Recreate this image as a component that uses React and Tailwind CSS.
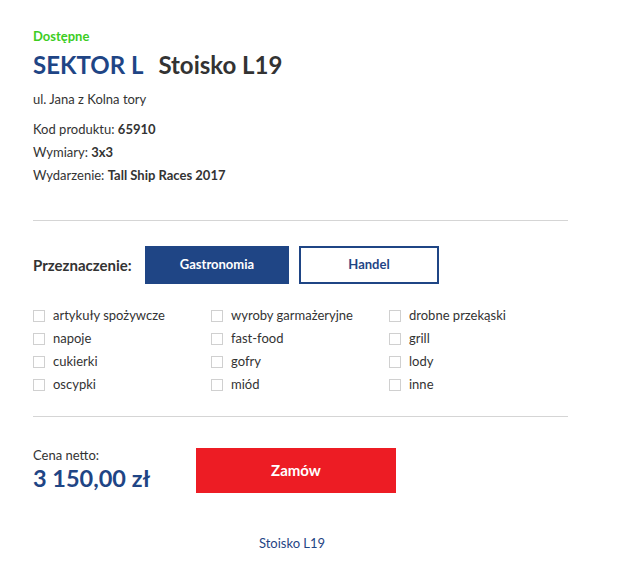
import React from "react";

const cols = [
  ["artykuły spożywcze", "napoje", "cukierki", "oscypki"],
  ["wyroby garmażeryjne", "fast-food", "gofry", "miód"],
  ["drobne przekąski", "grill", "lody", "inne"],
];

export default function App() {
  return (
    <div className="w-[639px] h-[585px] bg-white text-[#333] font-['Lato',sans-serif]">
      <div className="pl-[33px] w-[568px] pt-[28px]">
        <div className="text-[13px] font-bold text-[#3dcd1f] leading-[16px]">Dostępne</div>
        <div className="mt-[6px] flex items-baseline text-[24px] font-bold leading-[30px]">
          <span className="text-[#1f4585]">SEKTOR L</span>
          <span className="ml-[15px] text-[#333]">Stoisko L19</span>
        </div>
        <div className="mt-[11px] text-[13px] leading-[16px]">ul. Jana z Kolna tory</div>
        <div className="mt-[11px] text-[13px] leading-[23px]">
          <div>Kod produktu: <b>65910</b></div>
          <div>Wymiary: <b>3x3</b></div>
          <div>Wydarzenie: <b>Tall Ship Races 2017</b></div>
        </div>
        <div className="mt-[33px] h-px bg-[#d5d5d5]"></div>
        <div className="mt-[25px] flex items-center">
          <span className="text-[15px] font-bold w-[112px]">Przeznaczenie:</span>
          <div className="w-[144px] h-[38px] bg-[#1f4585] text-white text-[13px] font-bold flex items-center justify-center">Gastronomia</div>
          <div className="ml-[10px] w-[140px] h-[38px] border-2 border-[#1f4585] text-[#1f4585] text-[13px] font-bold flex items-center justify-center">Handel</div>
        </div>
        <div className="mt-[20px] flex">
          {cols.map((col, i) => (
            <div key={i} className="w-[178px] flex flex-col">
              {col.map((t) => (
                <div key={t} className="flex items-center h-[23px] text-[13px]">
                  <span className="w-[12px] h-[12px] border border-[#d0d0d0] mr-[8px]"></span>
                  <span>{t}</span>
                </div>
              ))}
            </div>
          ))}
        </div>
        <div className="mt-[20px] h-px bg-[#d5d5d5]"></div>
        <div className="mt-[30px] flex items-center">
          <div className="w-[163px]">
            <div className="text-[13px] leading-[16px]">Cena netto:</div>
            <div className="text-[23.5px] font-bold text-[#1f4585] leading-[30px]">3 150,00 zł</div>
          </div>
          <div className="w-[200px] h-[45px] bg-[#ed1c24] text-white text-[15px] font-bold flex items-center justify-center">Zamów</div>
        </div>
        <div className="mt-[41px] text-center text-[13px] text-[#1f4585] w-[518px]">Stoisko L19</div>
      </div>
    </div>
  );
}
